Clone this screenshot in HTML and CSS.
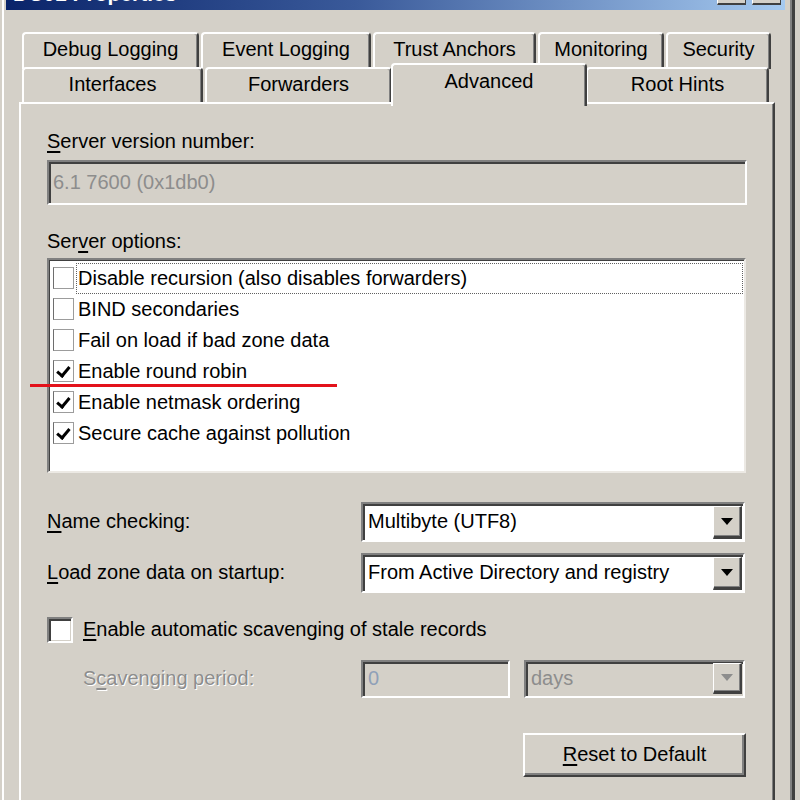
FILE: index.html
```html
<!DOCTYPE html>
<html>
<head>
<meta charset="utf-8">
<title>DC01 Properties</title>
<link rel="stylesheet" href="styles.css">
</head>
<body>
<div class="frame">
  <div class="titlebar">
    <span class="title">DC01 Properties</span>
    <div class="tbtns"><span class="tbtn"></span><span class="tbtn"></span></div>
  </div>

  <div class="tabs">
    <div class="tabrow">
      <div class="tab t-debug">Debug Logging</div>
      <div class="tab t-event">Event Logging</div>
      <div class="tab t-trust">Trust Anchors</div>
      <div class="tab t-mon">Monitoring</div>
      <div class="tab t-sec">Security</div>
    </div>
    <div class="tabrow">
      <div class="tab t-if">Interfaces</div>
      <div class="tab t-fwd">Forwarders</div>
      <div class="tab t-adv sel">Advanced</div>
      <div class="tab t-root">Root Hints</div>
    </div>
  </div>

  <div class="panel">
    <div class="lbl"><u>S</u>erver version number:</div>
    <div class="textbox disabled">6.1 7600 (0x1db0)</div>

    <div class="lbl gap-lbl">Ser<u>v</u>er options:</div>
    <div class="listbox">
      <div class="item"><span class="cb"></span><span class="itext focus">Disable recursion (also disables forwarders)</span></div>
      <div class="item"><span class="cb"></span><span class="itext">BIND secondaries</span></div>
      <div class="item"><span class="cb"></span><span class="itext">Fail on load if bad zone data</span></div>
      <div class="item"><span class="cb on"></span><span class="itext">Enable round robin</span></div>
      <div class="item"><span class="cb on"></span><span class="itext">Enable netmask ordering</span></div>
      <div class="item"><span class="cb on"></span><span class="itext">Secure cache against pollution</span></div>
    </div>

    <div class="field first">
      <span class="flabel"><u>N</u>ame checking:</span>
      <div class="combo"><span class="ctext">Multibyte (UTF8)</span><span class="dd"></span></div>
    </div>
    <div class="field">
      <span class="flabel"><u>L</u>oad zone data on startup:</span>
      <div class="combo"><span class="ctext">From Active Directory and registry</span><span class="dd"></span></div>
    </div>

    <div class="scav">
      <span class="cb3d"></span>
      <span class="scavtext"><u>E</u>nable automatic scavenging of stale records</span>
    </div>

    <div class="period">
      <span class="plabel">S<u>c</u>avenging period:</span>
      <div class="textbox small disabled num">0</div>
      <div class="combo small disabled"><span class="ctext">days</span><span class="dd off"></span></div>
    </div>

    <div class="btnrow">
      <div class="button"><u>R</u>eset to Default</div>
    </div>
  </div>

  <div class="redmark"></div>
</div>
</body>
</html>
```

FILE: styles.css
```css
html, body {
  margin: 0;
  padding: 0;
  width: 800px;
  height: 800px;
  overflow: hidden;
  background: #d4d0c8;
  font-family: "Liberation Sans", Arial, sans-serif;
  font-size: 20px;
  color: #000;
}

u { text-decoration: underline; text-underline-offset: 3px; }

.frame {
  position: relative;
  display: flex;
  flex-direction: column;
  margin-left: 2px;
  width: 786px;
  height: 800px;
  border-left: 2px solid #ffffff;
  border-right: 2px solid #808080;
  box-shadow: 3px 0 0 #404040;
  background: #d4d0c8;
}

.titlebar {
  display: flex;
  justify-content: space-between;
  align-items: flex-end;
  height: 10px;
  margin-left: 2px;
  margin-right: 5px;
  overflow: hidden;
  background: linear-gradient(to right, #0a246a 0%, #3a5a9a 45%, #a6caf0 100%);
}

.title {
  color: #fff;
  font-weight: bold;
  font-size: 21px;
  line-height: 20px;
  margin-bottom: 6px;
  padding-left: 7px;
  white-space: nowrap;
}

.tbtns {
  display: flex;
  gap: 6px;
  margin-right: 4px;
  align-self: flex-end;
  margin-bottom: 5px;
}

.tbtn {
  display: block;
  width: 27px;
  height: 20px;
  background: #d4d0c8;
  border-right: 1px solid #404040;
  border-bottom: 2px solid #404040;
  border-left: 1px solid #fff;
}

/* Tabs */
.tabs {
  display: flex;
  flex-direction: column;
  margin-top: 22px;
  margin-left: 18px;
}

.tabrow {
  display: flex;
  align-items: flex-start;
  height: 35px;
}

.tab {
  box-sizing: border-box;
  height: 37px;
  display: flex;
  align-items: center;
  justify-content: center;
  padding-bottom: 4px;
  background: #d4d0c8;
  border-top: 2px solid #fff;
  border-left: 2px solid #fff;
  border-right: 2px solid #404040;
  box-shadow: inset -1px 0 0 #808080;
  border-top-left-radius: 4px;
  border-top-right-radius: 4px;
  white-space: nowrap;
}

.t-debug { width: 177px; }
.t-event { width: 170px; margin-left: 2px; }
.t-trust { width: 163px; margin-left: 2px; }
.t-mon   { width: 126px; margin-left: 2px; }
.t-sec   { width: 105px; margin-left: 2px; }

.t-if   { width: 181px; }
.t-fwd  { width: 187px; margin-left: 2px; }
.t-adv  { width: 196px; }
.t-root { width: 183px; }

.tab.sel {
  position: relative;
  z-index: 2;
  height: 43px;
  margin-top: -4px;
  margin-left: -1px;
  margin-right: -1px;
  padding-bottom: 8px;
}

/* Panel */
.panel {
  display: flex;
  flex-direction: column;
  margin-left: 15px;
  width: 756px;
  height: 720px;
  padding: 25px 26px 0 26px;
  box-sizing: border-box;
  border-top: 2px solid #fff;
  border-left: 2px solid #fff;
  border-right: 2px solid #404040;
  box-shadow: inset -1px 0 0 #808080;
}

.lbl {
  line-height: 24px;
  height: 24px;
}

.gap-lbl { margin-top: 24px; }

.textbox {
  box-sizing: border-box;
  margin-top: 7px;
  height: 45px;
  display: flex;
  align-items: center;
  padding-left: 4px;
  border-top: 2px solid #808080;
  border-left: 2px solid #808080;
  border-right: 2px solid #fff;
  border-bottom: 2px solid #fff;
  box-shadow: inset 2px 2px 0 #404040;
  background: #fff;
}

.textbox.disabled {
  background: #d4d0c8;
  color: #8d8d8d;
}

.listbox {
  box-sizing: border-box;
  margin-top: 5px;
  height: 215px;
  width: 699px;
  padding-top: 3px;
  background: #fff;
  border-top: 2px solid #808080;
  border-left: 2px solid #808080;
  border-right: 2px solid #ece9e4;
  border-bottom: 2px solid #ece9e4;
  box-shadow: inset 1px 1px 0 #404040;
}

.item {
  display: flex;
  align-items: center;
  height: 31px;
}

.cb {
  box-sizing: border-box;
  width: 21px;
  height: 22px;
  margin-left: 4px;
  border: 1px solid #9c9c9c;
  border-left-color: #6e6e6e;
  background: #fff;
  position: relative;
  flex: none;
}

.cb.on::after {
  content: "";
  position: absolute;
  left: 4px;
  top: 3px;
  width: 5px;
  height: 10px;
  border-right: 3px solid #000;
  border-bottom: 3px solid #000;
  transform: rotate(40deg) translate(1px, -1px);
}

.itext {
  box-sizing: border-box;
  flex: 1;
  height: 31px;
  line-height: 29px;
  margin-left: 2px;
  margin-right: 1px;
  padding-left: 1px;
  border: 1px solid transparent;
  white-space: nowrap;
}

.itext.focus {
  border: 1px dotted #606060;
}

/* Name / Load fields */
.field {
  display: grid;
  grid-template-columns: 314px 384px;
  align-items: center;
  margin-top: 11px;
}

.field.first { margin-top: 29px; }

.combo {
  box-sizing: border-box;
  height: 40px;
  display: flex;
  align-items: center;
  justify-content: space-between;
  padding-left: 5px;
  padding-right: 1px;
  background: #fff;
  border-top: 2px solid #808080;
  border-left: 2px solid #808080;
  border-right: 2px solid #fff;
  border-bottom: 2px solid #fff;
  box-shadow: inset 2px 2px 0 #404040;
}

.combo.disabled {
  background: #d4d0c8;
  color: #8d8d8d;
}

.ctext { white-space: nowrap; }

.dd {
  box-sizing: border-box;
  position: relative;
  width: 29px;
  height: 33px;
  margin-top: 1px;
  background: #d4d0c8;
  border-top: 1px solid #fff;
  border-left: 1px solid #fff;
  border-right: 2px solid #404040;
  border-bottom: 3px solid #404040;
  box-shadow: inset -1px -1px 0 #808080;
}

.dd::after {
  content: "";
  position: absolute;
  left: 7px;
  top: 11px;
  border-left: 6px solid transparent;
  border-right: 6px solid transparent;
  border-top: 7px solid #000;
}

.dd.off::after { border-top-color: #8d8d8d; }

/* Scavenging */
.scav {
  display: flex;
  align-items: center;
  margin-top: 24px;
  height: 26px;
}

.cb3d {
  box-sizing: border-box;
  width: 26px;
  height: 26px;
  background: #fff;
  border-top: 2px solid #808080;
  border-left: 2px solid #808080;
  border-right: 2px solid #fff;
  border-bottom: 2px solid #fff;
  box-shadow: inset 2px 2px 0 #404040, inset -1px -1px 0 #d4d0c8;
}

.scavtext {
  margin-left: 10px;
  white-space: nowrap;
}

.period {
  display: grid;
  grid-template-columns: 314px 149px 235px;
  column-gap: 0;
  align-items: center;
  margin-top: 17px;
}

.plabel {
  padding-left: 36px;
  color: #8d8d8d;
  text-shadow: 1px 1px 0 #fff;
  white-space: nowrap;
}

.textbox.small {
  margin-top: 0;
  height: 38px;
  padding-left: 5px;
}

.textbox.num { color: #8fa0b8; }

.combo.small {
  height: 38px;
  margin-left: 14px;
}

.combo.small .dd {
  height: 31px;
  margin-top: 0;
}

.combo.small .dd::after { top: 10px; }

.btnrow {
  display: flex;
  justify-content: flex-end;
  margin-top: 35px;
  padding-right: 1px;
}

.button {
  box-sizing: border-box;
  width: 223px;
  height: 44px;
  display: flex;
  align-items: center;
  justify-content: center;
  background: #d4d0c8;
  border-top: 2px solid #fff;
  border-left: 2px solid #fff;
  border-right: 2px solid #404040;
  border-bottom: 2px solid #404040;
  box-shadow: inset -2px -2px 0 #808080;
  white-space: nowrap;
}

/* Annotation mark over the list */
.redmark {
  position: absolute;
  left: 26px;
  top: 384px;
  width: 307px;
  height: 3px;
  background: #e3121b;
}
```
